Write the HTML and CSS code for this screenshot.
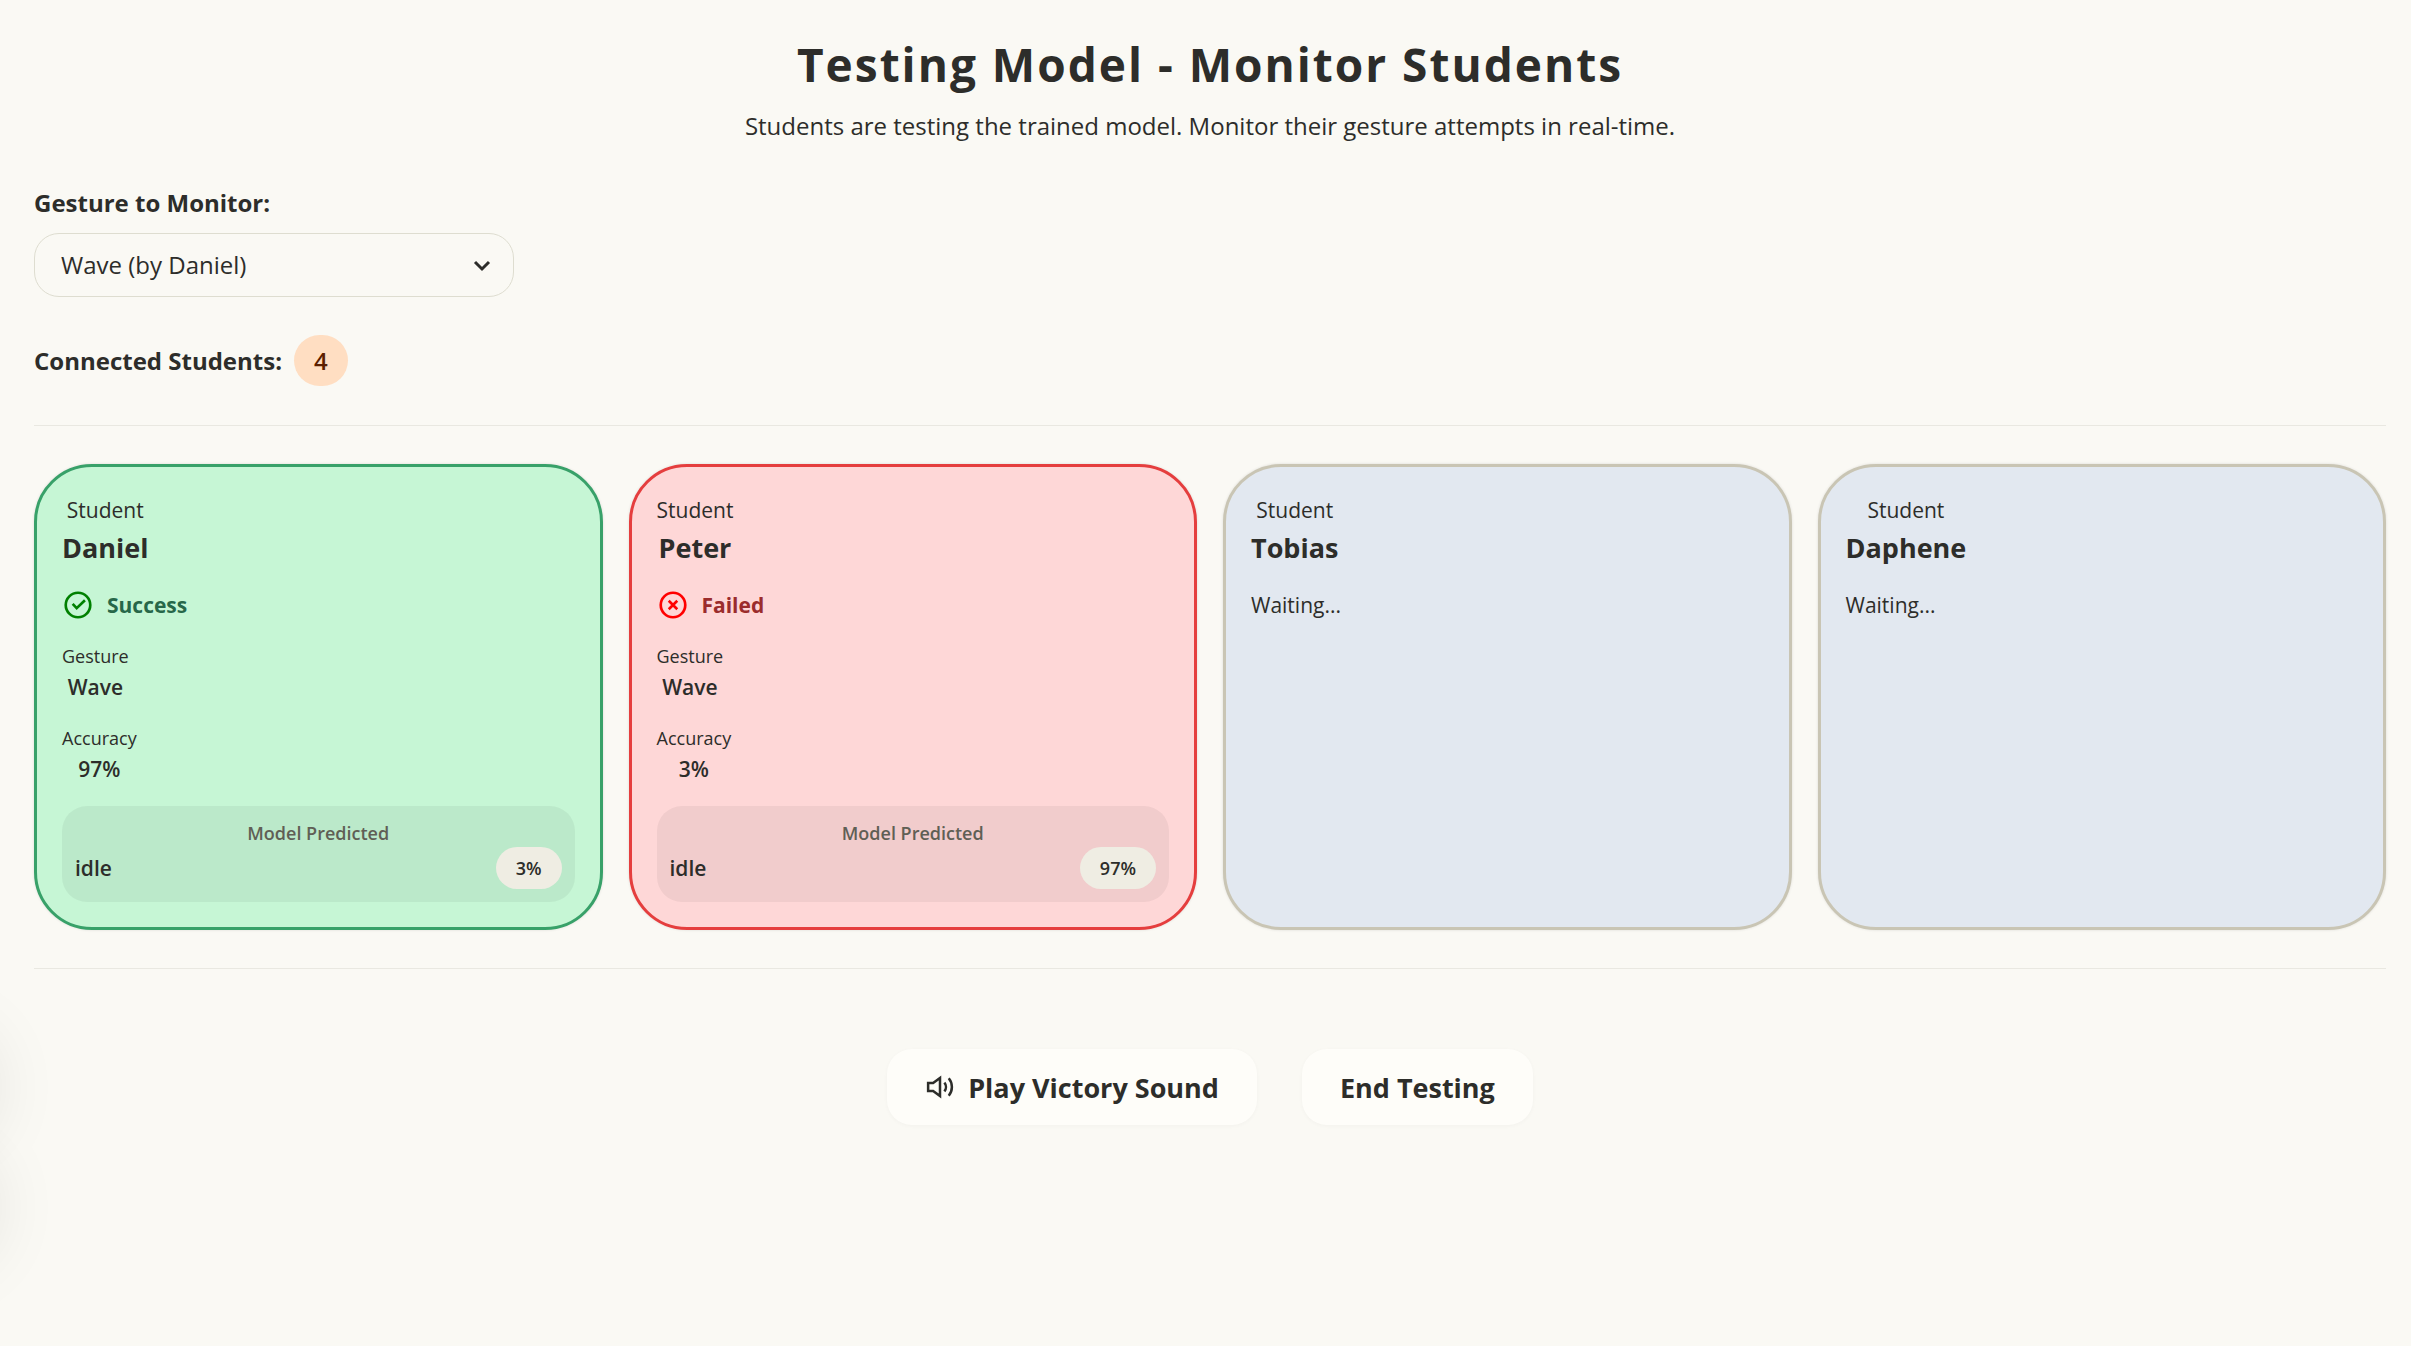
FILE: index.html
```html
<!DOCTYPE html>
<html lang="en">
	<head>
		<meta charset="utf-8">
		<title>Testing Model - Monitor Students</title>
		<link rel="stylesheet" href="styles.css">
	</head>
	<body>
	<div class="edge-shadow edge-shadow-top"></div>
	<div class="edge-shadow edge-shadow-bottom"></div>
	<main class="page">
		<header class="heading">
			<h1>Testing Model - Monitor Students</h1>
			<p>Students are testing the trained model. Monitor their gesture attempts in real-time.</p>
		</header>

		<div class="monitor">
			<label for="gesture">Gesture to Monitor:</label>
			<div class="select-wrap">
				<select id="gesture">
					<option>Wave (by Daniel)</option>
				</select>
				<svg class="chevron" viewBox="0 0 24 24"><path d="M5 9l7 7 7-7"/></svg>
			</div>
		</div>

		<div class="connected">
			<span>Connected Students:</span>
			<span class="count">4</span>
		</div>

		<section class="cards">
			<article class="card success">
				<div class="pair">
					<span class="role">Student</span>
					<h2>Daniel</h2>
				</div>
				<div class="status">
					<svg viewBox="0 0 24 24"><circle cx="12" cy="12" r="9.200"/><path d="M8 11.200l3 3.200 6.200-6"/></svg>
					<strong>Success</strong>
				</div>
				<div class="pair">
					<span class="caption">Gesture</span>
					<span class="value">Wave</span>
				</div>
				<div class="pair">
					<span class="caption">Accuracy</span>
					<span class="value">97%</span>
				</div>
				<div class="predicted">
					<div class="predicted-title">Model Predicted</div>
					<div class="predicted-row">
						<span class="value">idle</span>
						<span class="pill">3%</span>
					</div>
				</div>
			</article>

			<article class="card failed">
				<div class="pair">
					<span class="role">Student</span>
					<h2>Peter</h2>
				</div>
				<div class="status">
					<svg viewBox="0 0 24 24"><circle cx="12" cy="12" r="9.200"/><path d="M8.800 8.800l6.400 6.400M15.200 8.800l-6.400 6.400"/></svg>
					<strong>Failed</strong>
				</div>
				<div class="pair">
					<span class="caption">Gesture</span>
					<span class="value">Wave</span>
				</div>
				<div class="pair">
					<span class="caption">Accuracy</span>
					<span class="value">3%</span>
				</div>
				<div class="predicted">
					<div class="predicted-title">Model Predicted</div>
					<div class="predicted-row">
						<span class="value">idle</span>
						<span class="pill">97%</span>
					</div>
				</div>
			</article>

			<article class="card">
				<div class="pair">
					<span class="role">Student</span>
					<h2>Tobias</h2>
				</div>
				<div class="status">Waiting...</div>
			</article>

			<article class="card">
				<div class="pair">
					<span class="role">Student</span>
					<h2>Daphene</h2>
				</div>
				<div class="status">Waiting...</div>
			</article>
		</section>

		<div class="actions">
			<button type="button">
				<svg viewBox="0 0 24 24"><path d="M2.500 8.800h4L12 4.800v14.400L6.500 15.200h-4zM15.500 8.500a5.500 5.500 0 0 1 0 7M19 5a11 11 0 0 1 0 14"/></svg>
				Play Victory Sound
			</button>
			<button type="button">End Testing</button>
		</div>
	</main>
	</body>
</html>
```
FILE: styles.css
```css
*{box-sizing:border-box;}

body{margin:0;background-color:#faf9f4;color:#2d2d2a;font-family:"Segoe UI","Open Sans",sans-serif;font-size:24px;line-height:36px;}

h1,h2,p{margin:0;}

.page{padding:32px 25px 40px 34px;}

.heading{text-align:center;margin-bottom:41px;}
.heading h1{font-size:46px;line-height:64px;font-weight:700;letter-spacing:2px;margin-bottom:12px;}

.monitor{margin-bottom:38px;}
.monitor label{display:block;font-weight:700;margin-bottom:12px;}

.select-wrap{position:relative;width:480px;max-width:100%;}
.select-wrap select{appearance:none;width:100%;height:64px;padding:0 60px 0 26px;border:1px solid #deddd0;border-radius:25px;background:transparent;color:inherit;font:inherit;}
.chevron{position:absolute;right:20px;top:20px;width:24px;height:24px;fill:none;stroke:#2d2d2a;stroke-width:3;pointer-events:none;}

.connected{display:flex;align-items:center;gap:12px;font-weight:700;}
.count{padding:0 20px;line-height:51px;border-radius:26px;background-color:#ffdec2;color:#5c1f00;font-weight:600;}

.cards{display:grid;grid-template-columns:repeat(4,1fr);gap:26px;margin-top:39px;padding:38px 0;border-top:1px solid #e9e8e1;border-bottom:1px solid #e9e8e1;}

.card{display:flex;flex-direction:column;align-items:flex-start;gap:20px;padding:25px;border:3px solid #c9c5b4;border-radius:58px;background-color:#e2e8f0;box-shadow:0 0 3px rgba(0,0,0,0.12);}
.card.success{background-color:#c6f6d5;border-color:#38a169;}
.card.failed{background-color:#fed7d7;border-color:#e53e3e;}

.pair{display:flex;flex-direction:column;align-items:center;}
.role{font-size:21px;}
.card h2{font-size:27px;line-height:40px;font-weight:700;}

.status{display:flex;align-items:center;gap:13px;font-size:21px;line-height:34px;}
.status svg{width:32px;height:32px;fill:none;stroke-width:2;}
.success .status svg{stroke:#008000;}
.failed .status svg{stroke:#ff0000;}
.success strong{color:#276749;}
.failed strong{color:#9b2c2c;}

.caption{font-size:18px;line-height:28px;}
.value{font-size:21px;line-height:34px;font-weight:600;}

.predicted{width:100%;padding:13px;border-radius:25px;background-color:rgba(0,0,0,0.05);}
.predicted-title{text-align:center;font-size:18px;line-height:28px;font-weight:600;color:#605f55;}
.predicted-row{display:flex;justify-content:space-between;align-items:center;}
.pill{padding:0 20px;line-height:42px;border-radius:21px;background-color:#efede3;font-size:18px;font-weight:600;}

.actions{display:flex;justify-content:center;gap:45px;margin-top:80px;}
.actions button{display:flex;align-items:center;gap:13px;height:76px;padding:0 38px;border:0;border-radius:25px;background-color:#fefdf9;color:inherit;font-family:inherit;font-size:27px;font-weight:700;box-shadow:0 1px 4px rgba(0,0,0,0.03);}
.actions svg{width:30px;height:30px;fill:none;stroke:#2d2d2a;stroke-width:2;}

/* soft shadows of the panels parked off the left edge */
.edge-shadow{position:fixed;left:-110px;width:90px;height:90px;border-radius:45px;box-shadow:0 0 70px 14px rgba(0,0,0,0.1);}
.edge-shadow-top{top:1042px;}
.edge-shadow-bottom{top:1162px;}
```
